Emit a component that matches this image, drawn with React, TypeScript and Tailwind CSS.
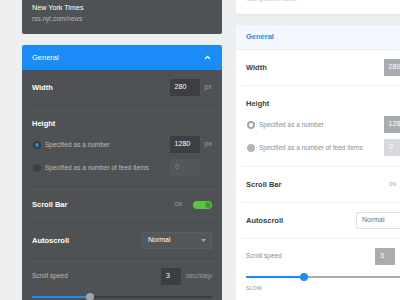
import React from 'react';

type PanelProps = { dark?: boolean };

function Separator({ dark }: PanelProps) {
    return <div className={`mx-[6px] h-px ${dark ? 'bg-[#46494c]' : 'bg-[#eef0f2]'}`} />;
}

function NumberBox({ dark, value, disabled, w = 'w-[30px]' }: PanelProps & { value: string; disabled?: boolean; w?: string }) {
    let tone = '';
    if (dark) tone = disabled ? 'bg-[#54575a] text-[#85888b]' : 'bg-[#3c3f41] text-white';
    else tone = disabled ? 'bg-[#d6d9dc] text-white' : 'bg-[#a9adb1] text-white';
    return (
        <div className={`flex h-[17px] ${w} shrink-0 items-center pl-[5px] text-[7px] ${tone}`}>{value}</div>
    );
}

function Unit({ dark, children }: PanelProps & { children: React.ReactNode }) {
    return (
        <span className={`ml-[5px] text-[7px] ${dark ? 'text-[#9a9da0]' : 'text-[#999c9f]'}`}>{children}</span>
    );
}

function Radio({ dark, on }: PanelProps & { on?: boolean }) {
    if (dark) {
        return on ? (
            <div className="flex h-[8px] w-[8px] shrink-0 items-center justify-center rounded-full bg-[#383a3c]">
                <div className="h-[4px] w-[4px] rounded-full bg-[#1f8ef3]" />
            </div>
        ) : (
            <div className="h-[8px] w-[8px] shrink-0 rounded-full bg-[#3d4042]" />
        );
    }
    return on ? (
        <div className="flex h-[8px] w-[8px] shrink-0 items-center justify-center rounded-full bg-[#a4a7aa]">
            <div className="h-[4px] w-[4px] rounded-full bg-white" />
        </div>
    ) : (
        <div className="h-[8px] w-[8px] shrink-0 rounded-full bg-[#b4b7ba]" />
    );
}

function Panel({ dark }: PanelProps) {
    const label = dark ? 'text-white' : 'text-[#3a3d40]';
    const sub = dark ? 'text-[#b9bcbf]' : 'text-[#8a8d90]';
    const body = dark ? 'bg-[#4f5255]' : 'bg-white';

    return (
        <div className="flex flex-col">
            {/* feed card */}
            <div
                className={`flex h-[60px] flex-col justify-end rounded-b-[2px] px-[10px] pb-[10px] ${
                    dark ? 'bg-[#4f5255]' : 'bg-white shadow-[0_1px_2px_rgba(0,0,0,0.05)]'
                }`}
            >
                <p className={`text-[7.2px] leading-[12px] ${dark ? 'text-white' : 'text-[#555]'}`}>New York Times</p>
                <p className={`text-[6.5px] leading-[10px] ${dark ? 'text-[#b4b7ba]' : 'text-[#c4c7ca]'}`}>
                    rss.nyt.com/news
                </p>
            </div>

            {/* section header */}
            <div
                className={`mt-[11px] flex h-[25px] items-center justify-between rounded-t-[2px] px-[10px] ${
                    dark ? 'bg-[#1b8cf7]' : 'border-b border-[#e2edf8] bg-[#f2f8fe]'
                }`}
            >
                <span className={`text-[7.5px] ${dark ? 'text-white' : 'font-bold text-[#2b88e2]'}`}>General</span>
                <svg width="7" height="5" viewBox="0 0 7 5" className="mr-[1px]">
                    <path d="M1 4 L3.5 1.5 L6 4" fill="none" stroke={dark ? '#fff' : '#2b88e2'} strokeWidth="1.3" />
                </svg>
            </div>

            <div className={`flex flex-col ${body} pb-[20px]`}>
                {/* width */}
                <div className="flex h-[35px] items-center px-[10px]">
                    <span className={`flex-1 text-[7.5px] font-bold ${label}`}>Width</span>
                    <NumberBox dark={dark} value="280" />
                    <Unit dark={dark}>px</Unit>
                </div>
                <Separator dark={dark} />

                {/* height */}
                <div className="flex h-[80px] flex-col px-[10px] pt-[12px]">
                    <span className={`text-[7.5px] font-bold leading-[12px] ${label}`}>Height</span>
                    <div className="mt-[6px] flex h-[17px] items-center">
                        <div className="ml-[1px]">
                            <Radio dark={dark} on />
                        </div>
                        <span className={`ml-[4px] flex-1 text-[6.5px] ${sub}`}>Specified as a number</span>
                        <NumberBox dark={dark} value="1280" />
                        <Unit dark={dark}>px</Unit>
                    </div>
                    <div className="mt-[6px] flex h-[17px] items-center">
                        <div className="ml-[1px]">
                            <Radio dark={dark} />
                        </div>
                        <span className={`ml-[4px] flex-1 text-[6.5px] ${sub}`}>Specified as a number of feed items</span>
                        <NumberBox dark={dark} value="0" disabled />
                        <span className="ml-[5px] w-[7px]" />
                    </div>
                </div>
                <Separator dark={dark} />

                {/* scroll bar */}
                <div className="flex h-[35px] items-center px-[10px]">
                    <span className={`flex-1 text-[7.5px] font-bold ${label}`}>Scroll Bar</span>
                    <span className={`mr-[11px] text-[5px] ${dark ? 'text-[#a8abae]' : 'text-[#9a9da0]'}`}>ON</span>
                    <div className="flex h-[8px] w-[19px] items-center justify-end rounded-full bg-[#5cc443] pr-[1px]">
                        <div className="h-[6px] w-[6px] rounded-full bg-[#3a9c2c]" />
                    </div>
                </div>
                <Separator dark={dark} />

                {/* autoscroll */}
                <div className="flex h-[35px] items-center px-[10px]">
                    <span className={`flex-1 text-[7.5px] font-bold ${label}`}>Autoscroll</span>
                    <div
                        className={`flex h-[17px] w-[70px] items-center justify-between px-[5px] ${
                            dark
                                ? 'border border-[#5b5e61] bg-[#53565a]'
                                : 'rounded-[1px] border border-[#dfe2e5] bg-white'
                        }`}
                    >
                        <span className={`text-[7px] ${dark ? 'text-white' : 'text-[#6f7275]'}`}>Normal</span>
                        <svg width="5" height="3" viewBox="0 0 5 3">
                            <path d="M0 0 L5 0 L2.5 3 Z" fill="#a5a8ab" />
                        </svg>
                    </div>
                </div>
                <Separator dark={dark} />

                {/* scroll speed */}
                <div className="flex flex-col px-[10px] pt-[8px]">
                    <div className="flex h-[18px] items-center">
                        <span className={`flex-1 text-[6.5px] ${sub}`}>Scroll speed</span>
                        <NumberBox dark={dark} value="3" w="w-[20px]" />
                        <Unit dark={dark}>sec/step</Unit>
                    </div>
                    <div className="relative mt-[8px] flex h-[8px] items-center">
                        <div className="h-[2px] w-[58px] bg-[#1b8cf7]" />
                        <div className={`h-[2px] flex-1 ${dark ? 'bg-[#3a3d40]' : 'bg-[#a9acaf]'}`} />
                        <div
                            className={`absolute left-[54px] top-0 h-[8px] w-[8px] rounded-full ${
                                dark ? 'bg-[#a3a6a9]' : 'bg-[#1b8cf7]'
                            }`}
                        />
                    </div>
                    <div className={`mt-[4px] flex justify-between text-[5px] tracking-[0.3px] ${sub}`}>
                        <span>SLOW</span>
                        <span>FAST</span>
                    </div>
                </div>
            </div>
        </div>
    );
}

export default function App() {
    return (
        <div className="flex h-[300px] w-[400px] overflow-hidden bg-[#eceef0] font-['Liberation_Sans',Arial,sans-serif]">
            <div className="-mt-[26px] ml-[22px] w-[200px] shrink-0">
                <Panel dark />
            </div>
            <div className="-mt-[46px] ml-[14px] w-[200px] shrink-0">
                <Panel />
            </div>
        </div>
    );
}
